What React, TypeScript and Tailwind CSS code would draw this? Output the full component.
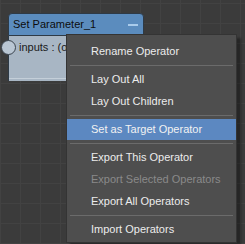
const ITEMS: ({ label: string; disabled?: boolean; active?: boolean } | "sep")[] = [
  { label: "Rename Operator" },
  "sep",
  { label: "Lay Out All" },
  { label: "Lay Out Children" },
  "sep",
  { label: "Set as Target Operator", active: true },
  "sep",
  { label: "Export This Operator" },
  { label: "Export Selected Operators", disabled: true },
  { label: "Export All Operators" },
  "sep",
  { label: "Import Operators" },
];

function OperatorNode() {
  return (
    <div className="absolute left-[8px] top-[13px] w-[136px] h-[68px] flex flex-col">
      <div className="h-[23px] rounded-t-[4px] bg-[#5b8cbe] border border-[#2e3a46] flex items-center justify-between pl-[4px] pr-[5px]">
        <span className="text-[11px] text-[#0d0d0d] leading-none">Set Parameter_1</span>
        <span className="w-[10px] h-[2px] bg-[#a9cbeb]" />
      </div>
      <div className="flex-1 bg-[#a8b6c4] border-x border-[#2e3a46] flex flex-col">
        <div className="h-[22px] flex items-center pl-[10px]">
          <span className="text-[11px] text-[#1a1a1a] leading-none">inputs : (output)</span>
        </div>
        <div className="flex-1" />
        <div className="h-[3px] border-t border-[#c4cfd9]" />
      </div>
      {/* input pin */}
      <div className="absolute left-[-7px] top-[27px] w-[15px] h-[15px] rounded-full bg-[#b9c6d3] border border-[#3a434d]" />
    </div>
  );
}

function ContextMenu() {
  return (
    <div className="absolute left-[66px] top-[34px] w-[171px] bg-[#4e4e4e] border border-[#343434] pt-[5px] pb-px shadow-[4px_4px_2px_rgba(0,0,0,0.35)]">
      {ITEMS.map((item, i) =>
        item === "sep" ? (
          <div key={i} className="py-[1px] px-[3px]">
            <div className="h-px bg-[#6b6b6b] my-[1px]" />
          </div>
        ) : (
          <div
            key={i}
            className={[
              "h-[21px] my-px flex items-center pl-[24px] text-[11px] leading-none",
              item.active ? "bg-[#5c88c1] text-[#f2f2f2]" : "",
              item.disabled ? "text-[#8a8a8a]" : "text-[#ececec]",
            ].join(" ")}
          >
            {item.label}
          </div>
        )
      )}
    </div>
  );
}

export default function App() {
  return (
    <div
      className="relative w-[245px] h-[244px] overflow-hidden bg-[#3b3b3b] bg-[linear-gradient(#424242_1px,transparent_1px),linear-gradient(90deg,#424242_1px,transparent_1px)] bg-[size:20px_20px] bg-[position:0_3px]"
      style={{ fontFamily: '"Liberation Sans", Arial, sans-serif' }}
    >
      <OperatorNode />
      <ContextMenu />
    </div>
  );
}
